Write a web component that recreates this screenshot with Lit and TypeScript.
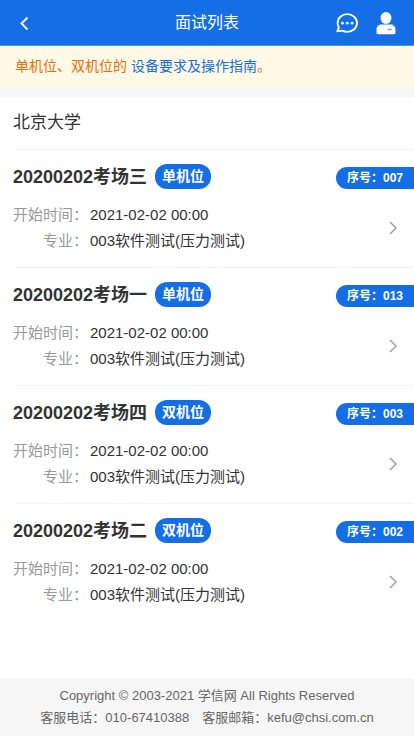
import { LitElement, html, css } from "lit";
import { customElement, property } from "lit/decorators.js";

interface Exam {
  room: string;
  mode: string;
  order: string;
  time: string;
  major: string;
}

const exam = (room: string, mode: string, order: string): Exam => ({
  room,
  mode,
  order,
  time: "2021-02-02 00:00",
  major: "003软件测试(压力测试)",
});

const EXAMS: Exam[] = [
  exam("20200202考场三", "单机位", "007"),
  exam("20200202考场一", "单机位", "013"),
  exam("20200202考场四", "双机位", "003"),
  exam("20200202考场二", "双机位", "002"),
];

@customElement("exam-card")
export class ExamCard extends LitElement {
  @property({ attribute: false }) exam!: Exam;

  static styles = css`
    :host {
      display: block;
      padding-left: 13px;
    }
    .link {
      display: block;
      color: #333;
      text-decoration: none;
      padding: 14px 0 13px;
    }
    .head {
      display: flex;
      align-items: center;
      height: 25px;
    }
    .room {
      margin: 0;
      font-size: 18px;
      line-height: 24px;
      font-weight: 700;
    }
    .mode {
      margin-left: 8px;
      padding: 0 7px;
      border-radius: 12px;
      background: #146fe6;
      color: #fff;
      font-size: 14px;
      line-height: 25px;
      font-weight: 700;
    }
    .order {
      align-self: flex-end;
      margin-left: auto;
      padding: 0 11px;
      border-radius: 11px 0 0 11px;
      background: #146fe6;
      color: #fff;
      font-size: 12px;
      line-height: 22px;
      font-weight: 700;
    }
    .body {
      display: flex;
      align-items: center;
      margin-top: 13px;
      padding-right: 16px;
    }
    .facts {
      flex: 1;
      display: grid;
      grid-template-columns: 75px 1fr;
      column-gap: 2px;
      margin: 0;
      font-size: 15px;
      line-height: 26px;
    }
    .label {
      color: #999;
      text-align: right;
    }
    .value {
      margin: 0;
    }
    .arrow {
      display: block;
    }
  `;

  render() {
    const e = this.exam;
    return html`
      <a class="link" href="#${e.order}">
        <div class="head">
          <h3 class="room">${e.room}</h3>
          <span class="mode">${e.mode}</span>
          <span class="order">序号：${e.order}</span>
        </div>
        <div class="body">
          <dl class="facts">
            <dt class="label">开始时间：</dt>
            <dd class="value">${e.time}</dd>
            <dt class="label">专业：</dt>
            <dd class="value">${e.major}</dd>
          </dl>
          <svg class="arrow" width="10" height="14" viewBox="0 0 10 14" fill="none" stroke="#999" stroke-width="1.4" aria-hidden="true">
            <path d="M2 1l6 6-6 6" />
          </svg>
        </div>
      </a>
    `;
  }
}

@customElement("app-root")
export class AppRoot extends LitElement {
  static styles = css`
    :host {
      display: flex;
      flex-direction: column;
      min-height: 100vh;
      background: #fff;
      color: #333;
      font-family: "Liberation Sans", "Noto Sans CJK SC", sans-serif;
    }
    .bar {
      display: grid;
      grid-template-columns: 1fr auto 1fr;
      align-items: center;
      height: 45px;
      padding: 0 16px;
      background: #146fe6;
      border-bottom: 1px solid #4a90ec;
      color: #fff;
    }
    .title {
      margin: 0;
      font-size: 16px;
      line-height: 24px;
      font-weight: 400;
    }
    .actions {
      display: flex;
      justify-content: flex-end;
      gap: 15px;
    }
    .icon {
      display: block;
      padding: 0;
      border: 0;
      background: none;
      color: inherit;
      justify-self: start;
      cursor: pointer;
    }
    .glyph {
      display: block;
    }
    .notice {
      margin: 0;
      padding: 8px 15px;
      background: #fff9e6;
      color: #f0690f;
      font-size: 14px;
      line-height: 24px;
    }
    .guide {
      color: #146fe6;
      text-decoration: none;
    }
    .list {
      flex: 1;
      border-top: 11px solid #f7f7f7;
    }
    .school {
      margin: 0;
      padding: 13px;
      font-size: 17px;
      line-height: 26px;
      font-weight: 400;
    }
    .rule {
      height: 1px;
      margin: 0 0 0 16px;
      border: 0;
      background: #f3f3f3;
    }
    .footer {
      padding: 7px 14px;
      background: #f6f6f6;
      color: #666;
      font-size: 13px;
      line-height: 22px;
      text-align: center;
    }
    .line {
      margin: 0;
    }
    .contact {
      display: flex;
      justify-content: center;
      gap: 13px;
    }
  `;

  render() {
    return html`
      <header class="bar">
        <button class="icon" aria-label="返回">
          <svg class="glyph" width="16" height="24" viewBox="0 0 16 24" fill="none" stroke="currentColor" stroke-width="1.800" aria-hidden="true">
            <path d="M11.500 6.500L5.500 12.500l6 6" />
          </svg>
        </button>
        <h1 class="title">面试列表</h1>
        <div class="actions">
          <button class="icon" aria-label="消息">
            <svg class="glyph" width="24" height="24" viewBox="0 0 24 24" fill="none" aria-hidden="true">
              <path d="M12.300 3.200C17.800 3.200 22 7 22 12s-4.200 8.800-9.700 8.800c-1.900 0-3.600-.4-5-1.200L2.200 20.300l1.700-3.700C2.900 15.200 2.600 13.800 2.600 12c0-5 4.200-8.800 9.700-8.800z" stroke="currentColor" stroke-width="1.800" stroke-linejoin="round" />
              <g fill="currentColor">
                <circle cx="7.500" cy="12.200" r="1.400" />
                <circle cx="12.300" cy="12.200" r="1.400" />
                <circle cx="17.100" cy="12.200" r="1.400" />
              </g>
            </svg>
          </button>
          <button class="icon" aria-label="个人中心">
            <svg class="glyph" width="24" height="24" viewBox="0 0 24 24" fill="currentColor" aria-hidden="true">
              <ellipse cx="12" cy="7" rx="5.500" ry="6" />
              <path d="M7.500 13.500h9c3 0 5 2 5 5.200v3.100c0 .9-.5 1.400-1.400 1.400H3.900c-.9 0-1.400-.5-1.400-1.400v-3.100c0-3.200 2-5.200 5-5.200z" />
              <rect x="13.500" y="17.700" width="4.500" height="1.600" rx=".8" fill="#6ba5f0" />
            </svg>
          </button>
        </div>
      </header>
      <p class="notice">单机位、双机位的 <a class="guide" href="#guide">设备要求及操作指南</a>。</p>
      <main class="list">
        <h2 class="school">北京大学</h2>
        ${EXAMS.map(
          (e) => html`<hr class="rule" /><exam-card .exam=${e}></exam-card>`
        )}
      </main>
      <footer class="footer">
        <p class="line">Copyright © 2003-2021 学信网 All Rights Reserved</p>
        <p class="line contact"><span>客服电话：010-67410388</span><span>客服邮箱：kefu@chsi.com.cn</span></p>
      </footer>
    `;
  }
}
